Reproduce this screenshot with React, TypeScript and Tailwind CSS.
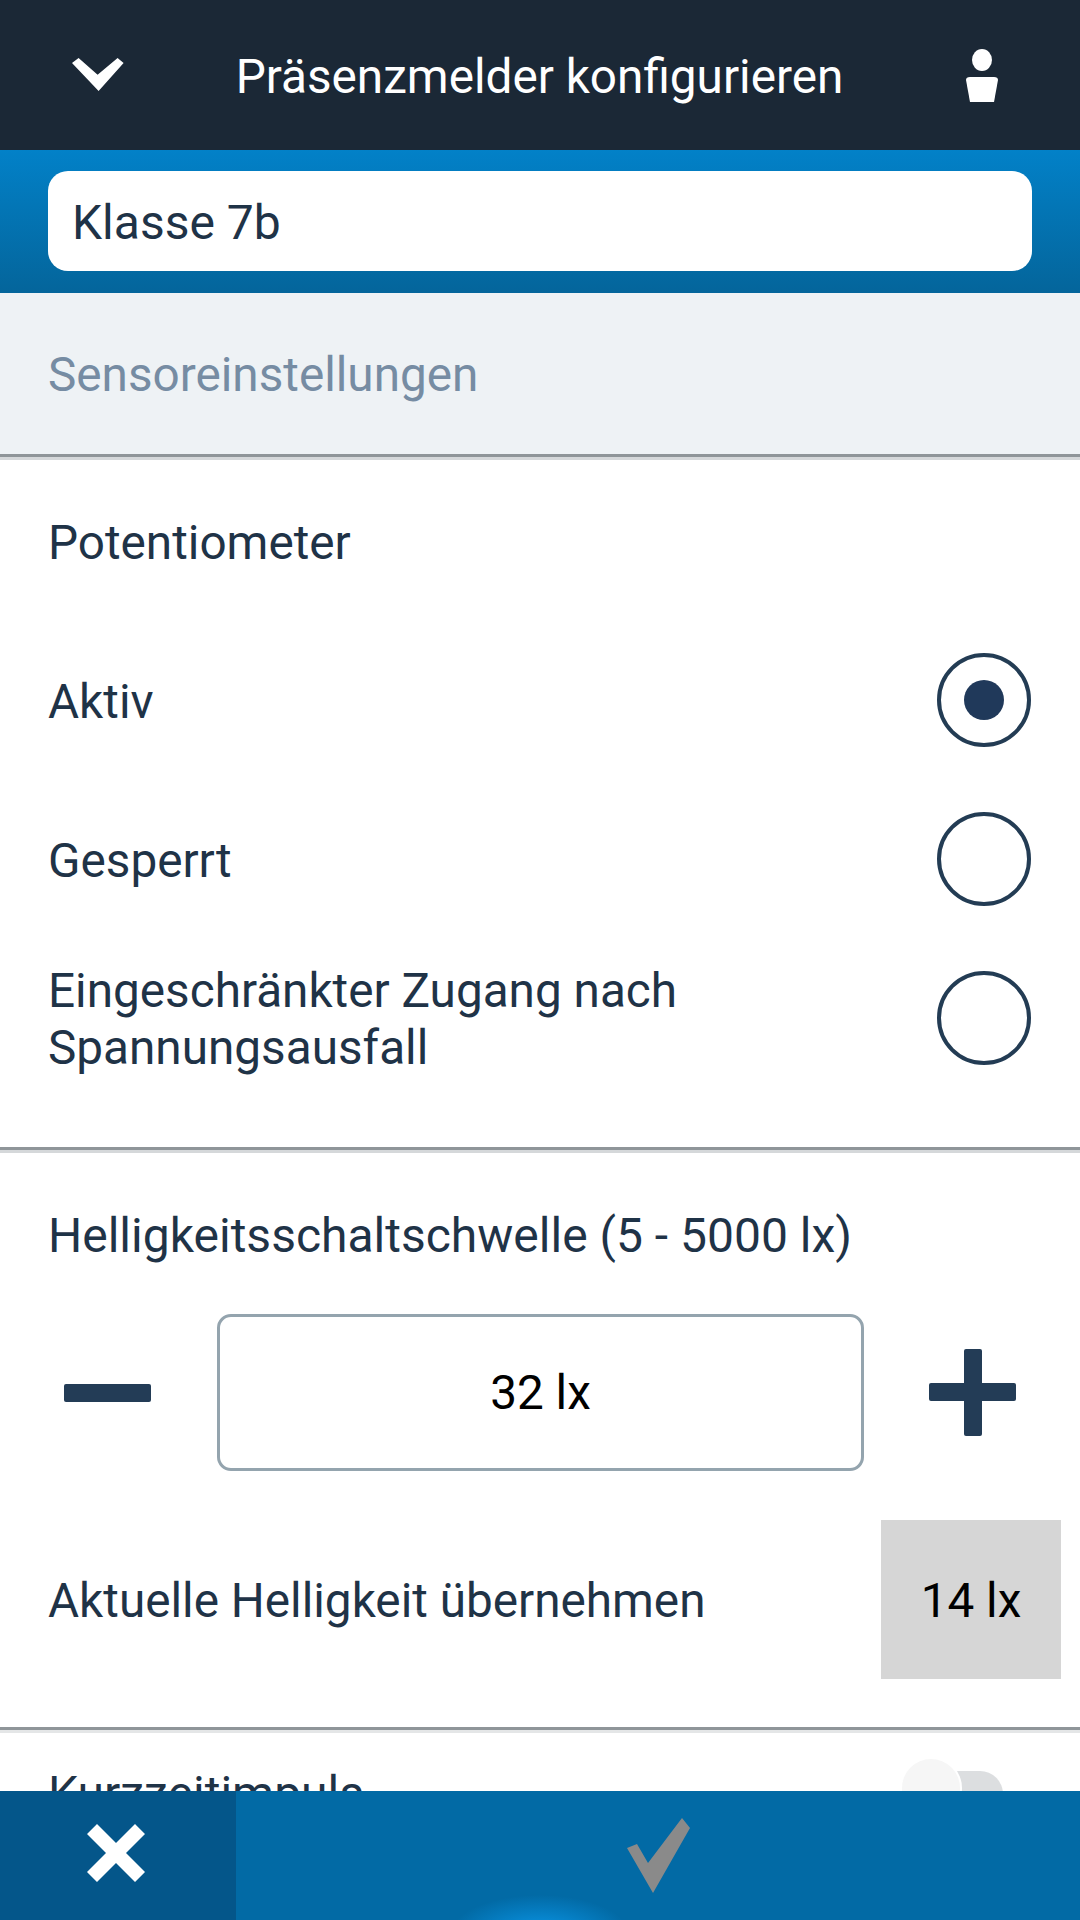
import React from "react";

const navy = "text-[#1f3347]";

function Radio({ checked }: { checked?: boolean }) {
  return (
    <div className="w-[94px] h-[94px] shrink-0 rounded-full border-4 border-[#233c54] flex items-center justify-center">
      {checked && <div className="w-10 h-10 rounded-full bg-[#20395a]" />}
    </div>
  );
}

function OptionRow({ label, checked, last }: { label: React.ReactNode; checked?: boolean; last?: boolean }) {
  return (
    <div className={`h-[94px] ${last ? "mb-[82px]" : "mb-[65px]"} flex items-center justify-between pl-12 pr-[49px] text-[47.7px] leading-[57px] ${navy}`}>
      <div className="pt-[4px]">{label}</div>
      <Radio checked={checked} />
    </div>
  );
}

export default function App() {
  return (
    <div className="w-[1080px] h-[1920px] flex flex-col overflow-hidden bg-white font-['Roboto',sans-serif]">
      <header className="h-[150px] shrink-0 bg-[#1b2836] flex items-center justify-between pl-[72px] pr-[81px] text-white">
        <svg width="52" height="33" viewBox="0 0 52 33" className="mt-[-1px]">
          <path d="M0 5 L6.6 0 L25.6 16.7 L45.6 0 L51.6 5 L26.6 33 Z" fill="#fff" />
        </svg>
        <div className="text-[47.7px] leading-none mr-[10px] pt-[5px]">Präsenzmelder konfigurieren</div>
        <svg width="34" height="54" viewBox="0 0 34 54" className="mt-[2px]">
          <ellipse cx="17" cy="11" rx="10" ry="11" fill="#fff" />
          <path d="M1 31 Q1 28 5 28 H29 Q33 28 33 31 L29 53 H5 Z" fill="#fff" />
        </svg>
      </header>

      <div className="h-[143px] shrink-0 px-12 pt-[21px] bg-gradient-to-b from-[#0281c8] to-[#04659b]">
        <div className={`h-[100px] rounded-[20px] bg-white pl-6 pt-[4px] flex items-center text-[48px] ${navy}`}>Klasse 7b</div>
      </div>

      <main className="flex-1 min-h-0 overflow-hidden">
        <div className="h-[161px] bg-[#eef2f5] pl-12 pt-[4px] flex items-center text-[47.7px] text-[#768ca3]">Sensoreinstellungen</div>
        <div className="h-[6px] bg-[#d5d8da] border-t-[3px] border-[#8f9599]" />

        <div className={`h-[162px] pl-12 pt-[6px] flex items-center text-[47.7px] ${navy}`}>Potentiometer</div>
        <div className="mt-[31px]">
          <OptionRow label="Aktiv" checked />
          <OptionRow label="Gesperrt" />
          <OptionRow last label={<>Eingeschränkter Zugang nach<br />Spannungsausfall</>} />
        </div>
        <div className="h-[6px] bg-[#d5d8da] border-t-[3px] border-[#8f9599]" />

        <div className={`h-[161px] pl-12 pt-[4px] flex items-center text-[48px] ${navy}`}>Helligkeitsschaltschwelle (5 - 5000 lx)</div>
        <div className="flex items-center h-[157px]">
          <div className="w-[217px] flex justify-center pr-[3px]">
            <div className="w-[87px] h-[18px] bg-[#233c56] rounded-[2px]" />
          </div>
          <div className="w-[647px] h-[157px] pt-[2px] rounded-[14px] border-[3px] border-[#94a4ae] flex items-center justify-center text-[47.7px] text-black">32 lx</div>
          <div className="flex-1 flex justify-center">
            <div className="relative w-[87px] h-[87px]">
              <div className="absolute left-0 top-[34px] w-[87px] h-[18px] bg-[#233c56] rounded-[2px]" />
              <div className="absolute left-[35px] top-0 w-[18px] h-[87px] bg-[#233c56] rounded-[2px]" />
            </div>
          </div>
        </div>
        <div className={`mt-[49px] h-[159px] pl-12 pr-[19px] flex items-center justify-between text-[47.7px] ${navy}`}>
          <div className="pt-[4px]">Aktuelle Helligkeit übernehmen</div>
          <div className="w-[180px] h-[159px] pt-[4px] bg-[#d6d6d6] flex items-center justify-center text-black">14 lx</div>
        </div>
        <div className="h-[6px] mt-[48px] bg-[#e4e6e7] border-t-[3px] border-[#8f9599]" />
        <div className={`h-[122px] pl-12 pr-[77px] flex items-center justify-between text-[48px] ${navy}`}>
          <div>Kurzzeitimpuls</div>
          <div className="relative w-[84px] h-[46px] rounded-full bg-[#dcdee0]">
            <div className="absolute left-[-17px] top-[-12px] w-[58px] h-[58px] rounded-full bg-[#f6f6f6] ring-2 ring-white" />
          </div>
        </div>
      </main>

      <footer className="relative h-[129px] shrink-0 overflow-hidden bg-[#026aa5] flex">
        <div className="w-[236px] bg-[#04568a] flex items-center justify-center">
          <svg width="58" height="58" viewBox="0 0 58 58" className="mt-[-5px] mr-[4px]">
            <path d="M10 0 L29 19 L48 0 L58 10 L39 29 L58 48 L48 58 L29 39 L10 58 L0 48 L19 29 L0 10 Z" fill="#fff" />
          </svg>
        </div>
        <div className="flex-1 flex items-center justify-center">
          <svg width="63" height="75" viewBox="0 0 63 75" className="mt-[-1px]">
            <path d="M0 30 L10 26 L21 45 L55 0 L63 10 L26 75 Z" fill="#8a8a8a" />
          </svg>
        </div>
        <div className="absolute left-[450px] top-[104px] w-[180px] h-[80px] rounded-[50%] bg-[radial-gradient(closest-side,#0a98ea,#026aa5)]" />
      </footer>
    </div>
  );
}
